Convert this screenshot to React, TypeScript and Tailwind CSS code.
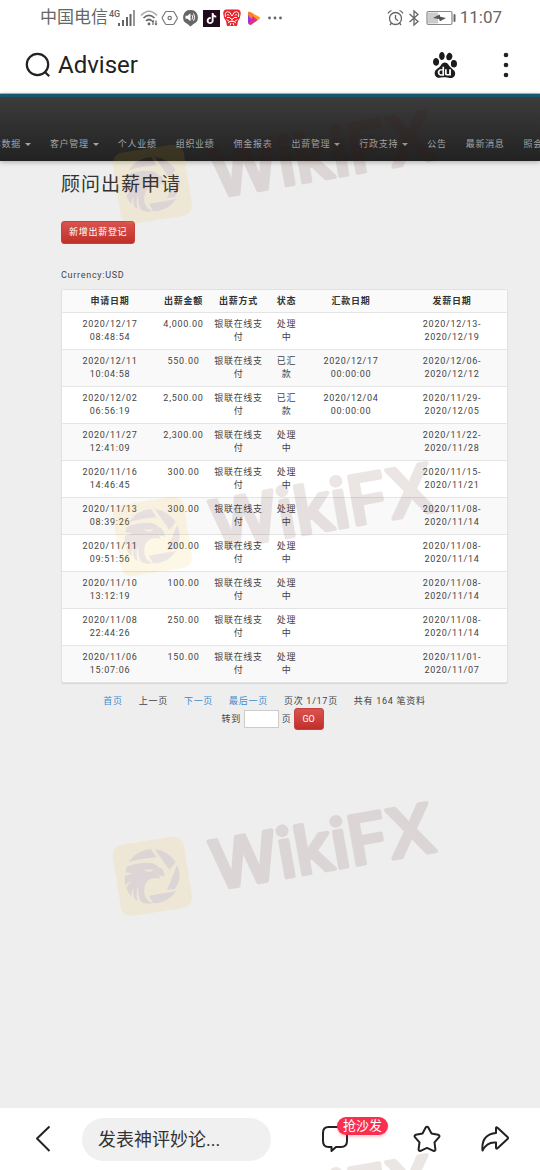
import { SiBaidu, SiTiktok } from "react-icons/si";

type Payout = {
  applied: [string, string];
  amount: string;
  status: string;
  remitted?: [string, string];
  period: [string, string];
};

const payouts: Payout[] = [
  { applied: ["2020/12/17", "08:48:54"], amount: "4,000.00", status: "处理中", period: ["2020/12/13-", "2020/12/19"] },
  { applied: ["2020/12/11", "10:04:58"], amount: "550.00", status: "已汇款", remitted: ["2020/12/17", "00:00:00"], period: ["2020/12/06-", "2020/12/12"] },
  { applied: ["2020/12/02", "06:56:19"], amount: "2,500.00", status: "已汇款", remitted: ["2020/12/04", "00:00:00"], period: ["2020/11/29-", "2020/12/05"] },
  { applied: ["2020/11/27", "12:41:09"], amount: "2,300.00", status: "处理中", period: ["2020/11/22-", "2020/11/28"] },
  { applied: ["2020/11/16", "14:46:45"], amount: "300.00", status: "处理中", period: ["2020/11/15-", "2020/11/21"] },
  { applied: ["2020/11/13", "08:39:26"], amount: "300.00", status: "处理中", period: ["2020/11/08-", "2020/11/14"] },
  { applied: ["2020/11/11", "09:51:56"], amount: "200.00", status: "处理中", period: ["2020/11/08-", "2020/11/14"] },
  { applied: ["2020/11/10", "13:12:19"], amount: "100.00", status: "处理中", period: ["2020/11/08-", "2020/11/14"] },
  { applied: ["2020/11/08", "22:44:26"], amount: "250.00", status: "处理中", period: ["2020/11/08-", "2020/11/14"] },
  { applied: ["2020/11/06", "15:07:06"], amount: "150.00", status: "处理中", period: ["2020/11/01-", "2020/11/07"] },
];

const menu = [
  { label: "基本数据", caret: true },
  { label: "客户管理", caret: true },
  { label: "个人业绩" },
  { label: "组织业绩" },
  { label: "佣金报表" },
  { label: "出薪管理", caret: true },
  { label: "行政支持", caret: true },
  { label: "公告" },
  { label: "最新消息" },
  { label: "照会" },
];

const StatusBar = () => {
  return (
    <div className="flex h-9 items-center justify-between pl-10 pr-[38px] text-[17px] text-[#666]">
      <div className="flex items-center">
        <span>中国电信</span>
        <svg width="28" height="20" viewBox="0 0 28 20" className="shrink-0" fill="#666">
          <text x="1" y="9" fontSize="9" fontWeight="500" fontFamily="Roboto">4G</text>
          <rect x="10" y="15" width="2" height="3" />
          <rect x="14" y="12" width="2" height="6" />
          <rect x="18" y="9" width="2" height="9" />
          <rect x="21.5" y="6" width="2" height="12" />
          <rect x="25" y="2" width="2" height="16" fill="#999" />
        </svg>
        <svg width="20" height="18" viewBox="0 0 20 18" className="ml-1 shrink-0" fill="none" stroke="#666" strokeWidth="1.7">
          <path d="M1 6.500Q9 -2 17 6.500" stroke="#aaa" />
          <path d="M3.500 9Q9 3.500 14.500 9" />
          <path d="M6 12Q9 9 12 12" />
          <circle cx="9" cy="15" r="1.400" fill="#666" stroke="none" />
          <path d="M13 16v-4.500M16 11.500V16" strokeWidth="1.200" />
          <path d="M11.500 13l1.500-2 1.500 2zM14.500 14.500l1.500 2 1.500-2z" fill="#666" stroke="none" />
        </svg>
        <svg width="18" height="16" viewBox="0 0 18 16" className="ml-px shrink-0" fill="none" stroke="#777" strokeWidth="1.200">
          <path d="M5.500 1.500h6.500q.8 0 1.200.7l2.900 5q.4.8 0 1.600l-2.900 5q-.4.7-1.200.7H5.500q-.8 0-1.200-.7l-2.900-5q-.4-.8 0-1.600l2.900-5q.4-.7 1.200-.7z" />
          <circle cx="8.700" cy="8" r="1.700" />
        </svg>
        <svg width="17" height="18" viewBox="0 0 17 18" className="ml-[3px] shrink-0">
          <path d="M8.500 1a7.300 7.300 0 0 1 3 14l-3 2.600-3-2.600a7.300 7.300 0 0 1 3-14z" fill="#666" />
          <path d="M3.500 6.700h2l3-2.500v8l-3-2.500h-2z" fill="#fff" />
          <path d="M10 6q1.500 2.200 0 4.500M11.500 4.500q2.500 3.700 0 7.300" stroke="#fff" fill="none" />
        </svg>
        <span className="ml-1 flex size-[17px] shrink-0 items-center justify-center bg-[#200a1c]">
          <SiTiktok size={11} color="#fff" />
        </span>
        <svg width="18" height="18" viewBox="0 0 18 18" className="ml-[3px] shrink-0">
          <path d="M3 .500h12q3 .5 2.700 4.500-.2 4-2.700 7l-1 5H4l-1-5Q.500 9 .300 5 0 1 3 .500z" fill="#e8232b" />
          <g fill="none" stroke="#fff" strokeWidth="1">
            <path d="M2.500 8Q1.500 3 4.500 2.700 7.500 2.700 8 5.500M15.500 8q1-5-2-5.300-3 0-3.500 2.800" />
            <path d="M4 6.500Q5 4 6 6.500M12 6.500q1-2.500 2 0M4 8.500h3M11 8.500h3" />
            <path d="M8 5.500L9 7l1-1.500M7 9l2 1.500L11 9M3.500 10.500l3 2h5l3-2M5 14l2-1.500M13 14l-2-1.500M7 16.500l1-2.500M11 16.500L10 14M9 10.500v2" />
          </g>
        </svg>
        <svg width="14" height="16" viewBox="0 0 14 16" className="ml-1.5 shrink-0">
          <path d="M1 3Q1 1 3 2l9.500 5q1 1 0 2L4 14.500Q2 15.500 1.500 13z" fill="#f9a021" />
          <path d="M1 4v8q0 3 2.500 2.500L6 9z" fill="#9237e6" />
          <path d="M1 3Q1 1 3 2l4 2.200-2 5.300L1.500 6z" fill="#fb7e2a" />
          <path d="M2 14l4-8 4.500 4.200-6 4.300q-1.500.8-2.500-.5z" fill="#ea2a88" />
        </svg>
        <svg width="16" height="4" viewBox="0 0 16 4" className="ml-1.5 shrink-0" fill="#666">
          <circle cx="2.500" cy="2" r="1.400" />
          <circle cx="8" cy="2" r="1.400" />
          <circle cx="13.500" cy="2" r="1.400" />
        </svg>
      </div>
      <div className="flex items-center">
        <svg width="17" height="18" viewBox="0 0 17 18" fill="none" stroke="#666" strokeWidth="1.300">
          <circle cx="8.500" cy="9.500" r="6" />
          <path d="M8.500 6v3.700l2.500 2M1 4.500Q2 2.300 4.500 1.500M16 4.500q-1-2.200-3.500-3M4.500 14l-1.500 2M12.500 14l1.500 2" />
        </svg>
        <svg width="12" height="18" viewBox="0 0 12 18" className="ml-1" fill="none" stroke="#666" strokeWidth="1.300">
          <path d="M1.500 5l8.500 7.500-4 3.500V2l4 3.500L1.500 13" />
        </svg>
        <svg width="30" height="16" viewBox="0 0 30 16" className="ml-1.5">
          <rect x="1" y="1.500" width="25" height="13" rx="1.500" fill="none" stroke="#888" strokeWidth="1.200" />
          <rect x="2" y="2.500" width="10" height="11" fill="#ccc" />
          <path d="M7 8l6.500-3.500.8 2.300L20 8l-6 3.300-1-2.300z" fill="#555" />
          <rect x="27.500" y="4" width="2" height="8" rx="1" fill="#666" />
        </svg>
        <span className="ml-1">11:07</span>
      </div>
    </div>
  );
};

const Header = () => {
  return (
    <header className="flex h-[58px] items-center border-b border-[#9cc3d2] pl-6 pr-[27px]">
      <button type="button" aria-label="搜索">
        <svg width="28" height="28" viewBox="0 0 28 28" fill="none" stroke="#222" strokeWidth="2.200">
          <circle cx="13.500" cy="13.500" r="10.700" />
          <path d="M20.500 20.500l4.700 4.700" />
        </svg>
      </button>
      <span className="ml-1.5 flex-1 text-2xl text-[#222]">Adviser</span>
      <button type="button" aria-label="百度">
        <SiBaidu size={26} color="#1c1c1c" />
      </button>
      <button type="button" aria-label="更多" className="ml-[43px]">
        <svg width="12" height="28" viewBox="0 0 12 28" fill="#222">
          <circle cx="5" cy="4" r="2.300" />
          <circle cx="5" cy="14" r="2.300" />
          <circle cx="5" cy="24" r="2.300" />
        </svg>
      </button>
    </header>
  );
};

const NavBar = () => {
  return (
    <nav className="h-[67px] shrink-0 overflow-hidden border-t-[3px] border-[#1a566e] bg-linear-to-b from-[#3c3c3c] to-[#222] pt-[41px] shadow-[0_1px_5px_rgba(0,0,0,0.3)]">
      <div className="-ml-[18px] flex gap-[19px] text-[9px] leading-[13px] tracking-[0.08em] whitespace-nowrap text-[#a3a3a3]">
        {menu.map((item) => (
          <a key={item.label} href="#" className="flex shrink-0 items-center gap-1">
            {item.label}
            {item.caret && (
              <span className="border-x-[3px] border-t-[3px] border-x-transparent border-t-[#a3a3a3]"></span>
            )}
          </a>
        ))}
      </div>
    </nav>
  );
};

const Lines = ({ value }: { value?: [string, string] }) => {
  if (!value) return null;
  return (
    <>
      {value[0]}
      <br />
      {value[1]}
    </>
  );
};

const PayoutTable = () => {
  return (
    <div className="overflow-hidden rounded-[3px] border border-[#e2e2e2] bg-white shadow-[0_1px_1px_rgba(0,0,0,0.1)]">
      <table className="w-full table-fixed text-center">
        <colgroup>
          <col className="w-[96px]" />
          <col className="w-[51px]" />
          <col className="w-[59px]" />
          <col className="w-[37px]" />
          <col className="w-[92px]" />
          <col className="w-[110px]" />
        </colgroup>
        <thead className="bg-[#fafafa] text-[#333]">
          <tr>
            <th className="pt-[5px] pb-1">申请日期</th>
            <th className="pt-[5px] pb-1">出薪金额</th>
            <th className="pt-[5px] pb-1">出薪方式</th>
            <th className="pt-[5px] pb-1">状态</th>
            <th className="pt-[5px] pb-1">汇款日期</th>
            <th className="pt-[5px] pb-1">发薪日期</th>
          </tr>
        </thead>
        <tbody>
          {payouts.map((row) => (
            <tr key={row.applied.join(" ")} className="border-t border-[#e4e4e4] align-top even:bg-[#f9f9f9]">
              <td className="p-[5px]"><Lines value={row.applied} /></td>
              <td className="py-[5px]">{row.amount}</td>
              <td className="p-[5px]">银联在线支付</td>
              <td className="p-[5px]">{row.status}</td>
              <td className="p-[5px]"><Lines value={row.remitted} /></td>
              <td className="p-[5px]"><Lines value={row.period} /></td>
            </tr>
          ))}
        </tbody>
      </table>
    </div>
  );
};

const Pager = () => {
  return (
    <div className="mt-3">
      <div className="flex justify-center gap-4 pr-10">
        <a href="#" className="text-[#428bca]">首页</a>
        <span>上一页</span>
        <a href="#" className="text-[#428bca]">下一页</a>
        <a href="#" className="text-[#428bca]">最后一页</a>
        <span>页次 1/17页</span>
        <span>共有 164 笔资料</span>
      </div>
      <form className="flex items-center justify-center pr-6">
        <label htmlFor="page">转到</label>
        <input id="page" className="mx-[3px] h-[18px] w-[35px] border border-[#ccc] bg-white px-1" />
        <span>页</span>
        <button type="button" className="ml-0.5 h-[22px] w-[30px] rounded-[3px] border border-[#c9403c] bg-linear-to-b from-[#d9534f] to-[#c12e2a] tracking-normal text-white">
          GO
        </button>
      </form>
    </div>
  );
};

const BottomBar = () => {
  return (
    <footer className="flex h-[62px] shrink-0 items-center bg-white pl-[34px] pr-[30px]">
      <button type="button" aria-label="返回">
        <svg width="18" height="28" viewBox="0 0 18 28" fill="none" stroke="#222" strokeWidth="2">
          <path d="M15.500 1.500L3 13.500l12.500 12.500" strokeLinejoin="round" />
        </svg>
      </button>
      <input
        aria-label="评论"
        placeholder="发表神评妙论..."
        className="ml-[30px] h-[43px] w-0 flex-1 rounded-full bg-[#f0f0f0] px-4 text-lg outline-none placeholder:text-[#333]"
      />
      <button type="button" aria-label="评论列表" className="relative ml-[50px]">
        <svg width="28" height="28" viewBox="0 0 28 28" fill="none" stroke="#222" strokeWidth="2" strokeLinejoin="round">
          <path d="M7.500 2h12.500q6 0 6 6v8q0 6-6 6h-5l-4.500 4v-4H7.500q-5.500 0-5.500-6V8q0-6 5.500-6z" />
        </svg>
        <span className="absolute -top-2 left-4 rounded-full bg-[#f92f50] px-1.5 text-[13px] leading-[18px] whitespace-nowrap text-white shadow-[0_2px_3px_rgba(249,47,80,0.25)]">
          抢沙发
        </span>
      </button>
      <button type="button" aria-label="收藏" className="ml-[64px]">
        <svg width="28" height="28" viewBox="0 0 28 28" fill="none" stroke="#222" strokeWidth="2" strokeLinejoin="round">
          <path d="M12.700 2.500q1.300-1.600 2.600 0l3.200 6 6.700 1.300q2 .7.900 2.400l-4.600 5.200.9 7q-.1 2-2 1.400L14 22.900l-6.400 2.900q-1.900.6-2-1.400l.9-7-4.600-5.200q-1.100-1.700.9-2.400l6.700-1.300z" />
        </svg>
      </button>
      <button type="button" aria-label="分享" className="ml-[39px]">
        <svg width="30" height="28" viewBox="0 0 30 28" fill="none" stroke="#222" strokeWidth="2" strokeLinejoin="round">
          <path d="M16 3q.2-1.300 1.500-.3l10 9.300q1 1 0 2l-10 9.300q-1.300 1-1.500-.5v-5.300Q7 16.500 2.500 25.500 1 9.500 16 8z" />
        </svg>
      </button>
    </footer>
  );
};

const Watermark = () => {
  return (
    <svg width="350" height="140" viewBox="0 0 1050 420" className="block">
      <g opacity="0.1">
        <rect x="49" y="154" width="216" height="216" rx="32" fill="#f0b40a" transform="rotate(-9 157 262)" />
        <g fill="#460a05">
          <path d="M88 216Q112 184 153 180L170 205Q125 208 88 219z" />
          <path d="M164 180Q206 186 227 219L208 243z" />
          <path d="M231 228Q250 268 223 301L201 303z" />
          <path d="M229 306Q204 343 159 343L147 320z" />
          <path d="M80 233Q118 219 150 222Q168 223 174 234Q194 238 194 264Q184 259 176 259L182 269Q158 264 146 273Q128 287 134 318Q140 337 158 343Q140 346 124 340Q112 322 115 292Q106 312 113 335L104 330Q97 318 101 298Q94 306 95 322Q84 312 79 297Q84 285 94 277Q82 281 76 289Q73 276 74 262Q84 256 96 254Q84 250 76 250zM132 241Q142 252 156 246L160 240Q148 244 132 241z" fillRule="evenodd" />
          <text
            x="346"
            y="303"
            fontSize="202"
            fontWeight="500"
            fontFamily="Inter, sans-serif"
            stroke="#460a05"
            strokeWidth="12"
            strokeLinejoin="round"
            transform="rotate(-10 346 303)"
          >
            WikiFX
          </text>
        </g>
      </g>
    </svg>
  );
};

export default function App() {
  return (
    <div className="relative flex min-h-screen flex-col overflow-hidden bg-white font-['Roboto','Noto_Sans_CJK_SC',sans-serif]">
      <StatusBar />
      <Header />
      <div className="flex flex-1 flex-col bg-[#eee]">
        <NavBar />
        <main className="flex-1 pl-[61px] pr-8 pt-[9px] text-[9px] leading-[13px] tracking-[0.08em] text-[#444]">
          <h1 className="text-[19px] leading-[30px] tracking-[1px] text-[#333]">顾问出薪申请</h1>
          <button type="button" className="mt-[21px] h-[23px] rounded-[3px] border border-[#c9403c] bg-linear-to-b from-[#d9534f] to-[#c12e2a] px-[7px] text-white">
            新增出薪登记
          </button>
          <p className="mt-[25px] mb-[7px]">Currency:USD</p>
          <PayoutTable />
          <Pager />
        </main>
      </div>
      <BottomBar />

      <div className="pointer-events-none absolute left-[100px] top-[97px] flex flex-col gap-[200px]" aria-hidden="true">
        <div className="flex flex-col gap-[212px]">
          <Watermark />
          <Watermark />
        </div>
        <div className="flex flex-col gap-[212px]">
          <Watermark />
          <Watermark />
        </div>
      </div>
    </div>
  );
}
